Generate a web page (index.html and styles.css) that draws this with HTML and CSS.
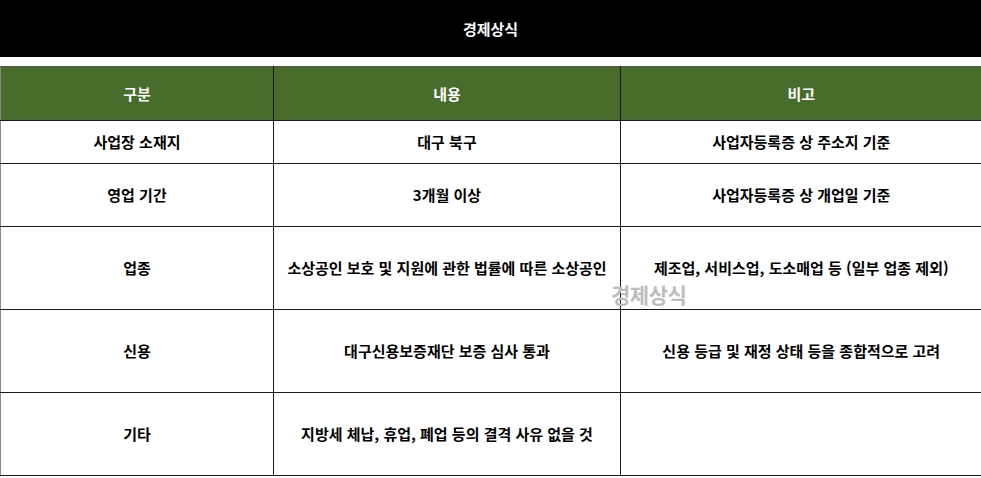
FILE: index.html
```html
<!DOCTYPE html>
<html lang="ko">
<head>
<meta charset="utf-8">
<link rel="stylesheet" href="styles.css">
</head>
<body>
<div class="page">
  <header class="topbar">경제상식</header>
  <table class="info">
    <colgroup>
      <col class="c1"><col class="c2"><col class="c3">
    </colgroup>
    <thead>
      <tr class="h"><th>구분</th><th>내용</th><th>비고</th></tr>
    </thead>
    <tbody>
      <tr class="r1"><td>사업장 소재지</td><td>대구 북구</td><td>사업자등록증 상 주소지 기준</td></tr>
      <tr class="r2"><td>영업 기간</td><td>3개월 이상</td><td>사업자등록증 상 개업일 기준</td></tr>
      <tr class="r3"><td>업종</td><td>소상공인 보호 및 지원에 관한 법률에 따른 소상공인</td><td>제조업, 서비스업, 도소매업 등 (일부 업종 제외)</td></tr>
      <tr class="r3"><td>신용</td><td>대구신용보증재단 보증 심사 통과</td><td>신용 등급 및 재정 상태 등을 종합적으로 고려</td></tr>
      <tr class="r3"><td>기타</td><td>지방세 체납, 휴업, 폐업 등의 결격 사유 없을 것</td><td></td></tr>
    </tbody>
  </table>
  <div class="watermark">경제상식</div>
</div>
</body>
</html>
```

FILE: styles.css
```css
html, body {
  margin: 0;
  padding: 0;
  background: #fff;
}
body {
  font-family: "Noto Sans CJK KR", "Noto Sans", sans-serif;
  font-weight: 700;
  font-size: 15px;
  color: #000;
}
.page {
  position: relative;
  width: 981px;
}
.topbar {
  height: 57px;
  background: #000;
  color: #fff;
  display: flex;
  align-items: center;
  justify-content: center;
  font-size: 15px;
  margin-bottom: 9px;
}
.info {
  width: 981px;
  table-layout: fixed;
  border-collapse: collapse;
}
.c1 { width: 273px; }
.c2 { width: 347px; }
.c3 { width: 361px; }
.info th, .info td {
  border: 1px solid #1a1a1a;
  text-align: center;
  vertical-align: middle;
  padding: 0;
  font-weight: 700;
  line-height: 20px;
}
.info th {
  background: #476c2b;
  color: #fff;
  border-top-color: #555;
}
.info tr.h { height: 54px; }
.info tr.r1 { height: 43px; }
.info tr.r2 { height: 63px; }
.info tr.r3 { height: 83px; }
.info td:first-child, .info th:first-child { border-left-color: #888; }
.info td:last-child, .info th:last-child { border-right: none; }
.watermark {
  position: absolute;
  left: 611px;
  top: 280px;
  font-size: 21px;
  line-height: 28px;
  color: #bdbdbd;
  font-weight: 700;
  letter-spacing: -0.5px;
}
```
